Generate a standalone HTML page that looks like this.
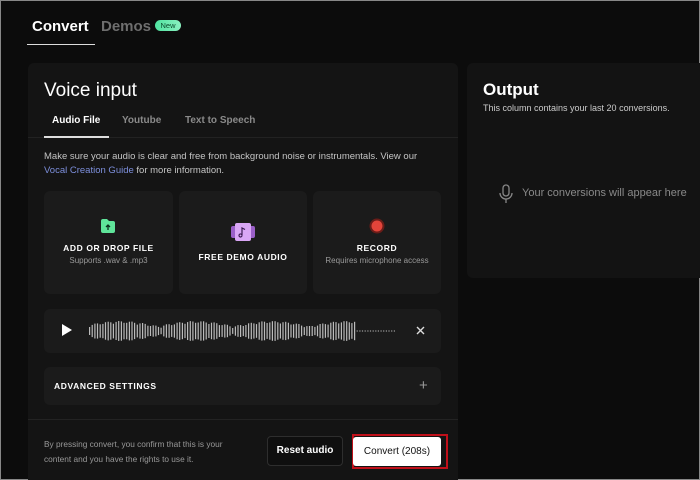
<!DOCTYPE html>
<html style="overflow:hidden;width:700px;height:480px"><head><style>
*{margin:0;padding:0;box-sizing:border-box}
body{width:700px;height:480px;background:#0c0c0c;font-family:"Liberation Sans",sans-serif;color:#fff;position:relative;overflow:hidden;border:1px solid #888}
.a{position:absolute}
.card{background:#1b1b1b;border-radius:6px}
.ct{font-size:8.5px;font-weight:bold;letter-spacing:.6px;text-align:center;width:100%}
.cs{font-size:8px;color:#9a9a9a;text-align:center;width:100%}
</style></head><body>
<div class="a" style="left:31px;top:17px;font-size:15px;font-weight:bold">Convert</div>
<div class="a" style="left:26px;top:43px;width:68px;height:1px;background:#ddd"></div>
<div class="a" style="left:100px;top:17px;font-size:15px;font-weight:bold;color:#6e6e6e">Demos</div>
<div class="a" style="left:154px;top:19px;width:26px;height:11px;border-radius:6px;background:linear-gradient(90deg,#4fe3a0,#8af0c0);color:#0b4a2c;font-size:7.5px;text-align:center;line-height:11px">New</div>

<div class="a" style="left:27px;top:62px;width:430px;height:417px;background:#141414;border-radius:6px 6px 0 0"></div>
<div class="a" style="left:43px;top:79px;font-size:19px">Voice input</div>
<div class="a" style="left:51px;top:114px;font-size:10px;font-weight:bold">Audio File</div>
<div class="a" style="left:121px;top:114px;font-size:10px;font-weight:bold;color:#8a8a8a">Youtube</div>
<div class="a" style="left:184px;top:114px;font-size:10px;font-weight:bold;color:#8a8a8a">Text to Speech</div>
<div class="a" style="left:27px;top:136px;width:430px;height:1px;background:#222"></div>
<div class="a" style="left:43px;top:135px;width:65px;height:2px;background:#ddd"></div>
<div class="a" style="left:43px;top:149px;font-size:9.5px;color:#c4c4c4;line-height:14px;width:388px">Make sure your audio is clear and free from background noise or instrumentals. View our <span style="color:#7d8fdc">Vocal Creation Guide</span> for more information.</div>

<div class="a card" style="left:43px;top:190px;width:129px;height:103px">
<svg class="a" style="left:56px;top:27px" width="16" height="16" viewBox="0 0 16 16"><path d="M1 3a2 2 0 0 1 2-2h4l2 2h4a2 2 0 0 1 2 2v8a2 2 0 0 1-2 2H3a2 2 0 0 1-2-2z" fill="#5fe49a"/><path d="M8 12V7M6 9l2-2 2 2" stroke="#0b2f1c" stroke-width="1.3" fill="none"/></svg>
<div class="a ct" style="top:52px">ADD OR DROP FILE</div>
<div class="a cs" style="top:65px">Supports .wav &amp; .mp3</div></div>
<div class="a card" style="left:178px;top:190px;width:128px;height:103px">
<svg class="a" style="left:52px;top:32px" width="24" height="18" viewBox="0 0 24 18"><rect x="0" y="3" width="24" height="12" rx="2" fill="#9a5fc8"/><rect x="4" y="0" width="16" height="18" rx="2" fill="#d9a6f5"/><path d="M11 12.5a1.5 1.5 0 1 1 0-.1V5l3 1.5" stroke="#3a1a52" stroke-width="1.2" fill="none"/></svg>
<div class="a ct" style="top:61px">FREE DEMO AUDIO</div></div>
<div class="a card" style="left:312px;top:190px;width:128px;height:103px">
<svg class="a" style="left:56px;top:27px" width="16" height="16"><circle cx="8" cy="8" r="7.5" fill="#6a1c18"/><circle cx="8" cy="8" r="5.5" fill="#e3443a"/></svg>
<div class="a ct" style="top:52px">RECORD</div>
<div class="a cs" style="top:65px">Requires microphone access</div></div>

<div class="a card" style="left:43px;top:308px;width:397px;height:44px">
<svg class="a" style="left:17px;top:15px" width="11" height="12"><path d="M1 0L11 6L1 12Z" fill="#fff"/></svg>
<svg class="a" id="w" style="left:45px;top:8px" width="310" height="28"></svg>
<svg class="a" style="left:372px;top:17px" width="9" height="9"><path d="M1 1L8 8M8 1L1 8" stroke="#ddd" stroke-width="1.4"/></svg>
</div>
<div class="a card" style="left:43px;top:366px;width:397px;height:38px">
<div class="a" style="left:10px;top:14px;font-size:8.5px;font-weight:bold;letter-spacing:.6px">ADVANCED SETTINGS</div>
<div class="a" style="left:375px;top:10px;font-size:15px;color:#999">+</div></div>
<div class="a" style="left:27px;top:418px;width:430px;height:1px;background:#232323"></div>
<div class="a" style="left:43px;top:436px;font-size:8.3px;color:#999;line-height:15px;width:200px">By pressing convert, you confirm that this is your content and you have the rights to use it.</div>
<div class="a" style="left:266px;top:435px;width:76px;height:30px;border:1px solid #2e2e2e;border-radius:4px;background:#0f0f0f;font-size:10px;font-weight:bold;text-align:center;line-height:28px">Reset audio</div>
<div class="a" style="left:351px;top:433px;width:96px;height:35px;border:2px solid #c0101a"></div>
<div class="a" style="left:352px;top:436px;width:88px;height:29px;background:#fff;border-radius:3px;color:#111;font-size:10px;text-align:center;line-height:29px">Convert (208s)</div>

<div class="a" style="left:466px;top:62px;width:240px;height:215px;background:#131313;border-radius:6px"></div>
<div class="a" style="left:482px;top:79px;font-size:17px;font-weight:bold">Output</div>
<div class="a" style="left:482px;top:102px;font-size:9px;color:#ccc">This column contains your last 20 conversions.</div>
<svg class="a" style="left:496px;top:183px" width="18" height="20" viewBox="0 0 18 20"><rect x="6" y="1" width="6" height="11" rx="3" stroke="#888" stroke-width="1.3" fill="none"/><path d="M3 9a6 6 0 0 0 12 0M9 15v4" stroke="#888" stroke-width="1.3" fill="none"/></svg>
<div class="a" style="left:521px;top:186px;font-size:11px;color:#8a8a8a">Your conversions will appear here</div>
<script>
var s='',w=document.getElementById('w');
for(var i=0;i<116;i++){var x=i*2.65,h;
if(i>100){h=1}else{h=5+Math.abs(Math.sin(i*0.7))*5+Math.abs(Math.sin(i*0.11+0.3))*10;}
s+='<rect x="'+x.toFixed(1)+'" y="'+(14-h/2).toFixed(1)+'" width="1.2" height="'+h.toFixed(1)+'" fill="#bbb"/>';}
w.innerHTML=s;
</script>
</body></html>
